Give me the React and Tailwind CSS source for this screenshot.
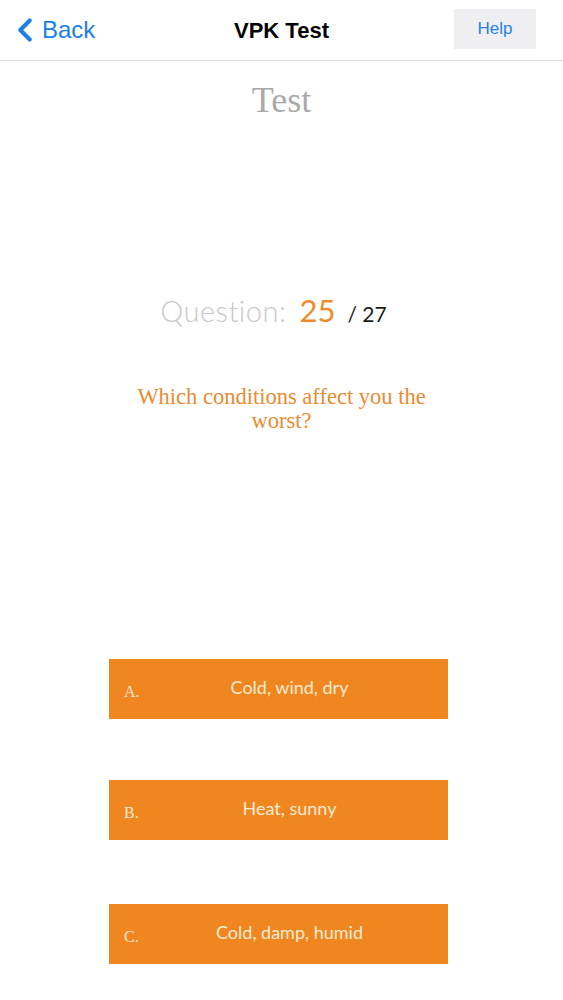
import { ChevronLeft } from "lucide-react";

const answers = [
  { letter: "A.", label: "Cold, wind, dry" },
  { letter: "B.", label: "Heat, sunny" },
  { letter: "C.", label: "Cold, damp, humid" },
];

export default function App() {
  return (
    <div className="w-[563px] h-[1000px] bg-white flex flex-col overflow-hidden" style={{ fontFamily: "'Liberation Sans', Arial, sans-serif" }}>
      {/* Nav bar */}
      <header className="h-[61px] border-b border-[#dcdcdf] flex items-center justify-between px-[14px] relative">
        <button className="flex items-center text-[#1a7fe8] text-[24px]">
          <ChevronLeft size={38} strokeWidth={2.6} className="-ml-[8px] -mr-[2px]" />
          <span>Back</span>
        </button>
        <h1 className="absolute left-1/2 -translate-x-1/2 text-[22px] font-bold text-black">VPK Test</h1>
        <button className="w-[82px] h-[40px] bg-[#efeff2] text-[#2a82dd] text-[17px] mr-[13px] -mt-[2px]">Help</button>
      </header>

      {/* Content */}
      <main className="flex flex-col items-center">
        <h2 className="mt-[21px] text-[36px] leading-[36px] text-[#a9a9a9]" style={{ fontFamily: "'Liberation Serif', 'DejaVu Serif', serif" }}>Test</h2>

        <div className="mt-[169px] flex items-baseline pr-[16px]" style={{ fontFamily: "Lato, 'Open Sans', sans-serif" }}>
          <span className="text-[29px] font-light text-[#c8c8cc] tracking-[0.5px]">Question:</span>
          <span className="ml-[13px] text-[31px] text-[#ef8a2a]">25</span>
          <span className="ml-[12px] text-[21px] text-[#1b1b1b]">/ 27</span>
        </div>

        <p className="mt-[51px] w-[330px] text-center text-[22.5px] leading-[24px] text-[#ea8a30]" style={{ fontFamily: "'Liberation Serif', 'DejaVu Serif', serif" }}>
          Which conditions affect you the worst?
        </p>

        <div className="mt-[226px] mr-[6px] flex flex-col gap-[61px]">
          {answers.map((a, i) => (
            <button
              key={a.letter}
              className={`w-[339px] h-[60px] bg-[#f08620] relative flex items-center justify-center pl-[22px] ${i === 2 ? "mt-[3px]" : ""}`}
            >
              <span className="absolute left-[15px] top-[21px] text-[16px] text-[#fde9d0]" style={{ fontFamily: "'Liberation Serif', serif" }}>{a.letter}</span>
              <span className="text-[18px] text-[#fcebd3] -mt-[3px]" style={{ fontFamily: "Lato, 'Open Sans', sans-serif" }}>{a.label}</span>
            </button>
          ))}
        </div>
      </main>
    </div>
  );
}
